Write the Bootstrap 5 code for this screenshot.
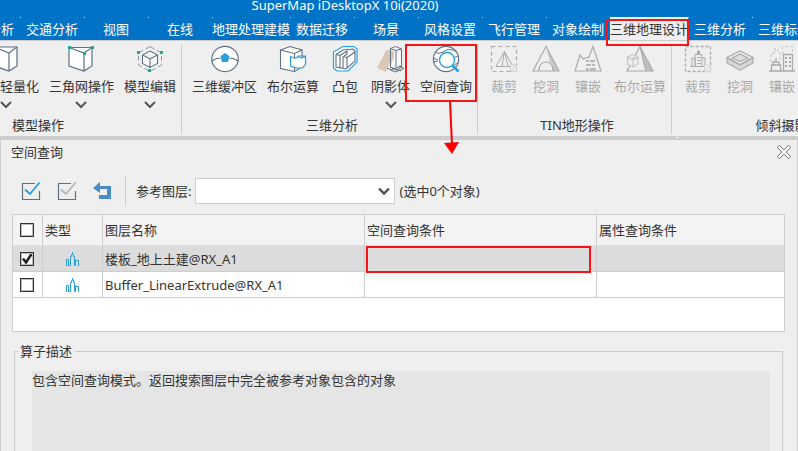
<!DOCTYPE html>
<html lang="zh-CN">
<head>
<meta charset="utf-8">
<meta name="viewport" content="width=device-width, initial-scale=1">
<title>SuperMap iDesktopX 10i(2020)</title>
<link href="https://cdn.jsdelivr.net/npm/bootstrap@5.3.0/dist/css/bootstrap.min.css" rel="stylesheet">
<style>
  :root { --line: #cdcdcd; --face: #efefef; --ink: #333; --steel: #5f7084; --sky: #2a9fdc; --teal: #27a68f; }
  body { font: 13px/20px "Noto Sans", "Noto Sans CJK SC", sans-serif; color: var(--ink); background: var(--face); overflow: hidden; }
  button { color: inherit; }
  svg { display: block; fill: none; stroke: var(--steel); flex: none; }
  .titlebar, .ribbon-tabs { background: #0173c7; color: #fff; }
  .titlebar { height: 17px; line-height: 10px; padding-right: 108px; font-size: 13px; }
  .ribbon-tabs { height: 24px; margin: 0; border-bottom: 1px solid var(--line); overflow: visible; }
  .ribbon-tabs .tab-btn { min-width: 64px; height: 23px; padding: 0; border: 0; background: none; color: #fff; white-space: nowrap; position: relative; }
  .ribbon-tabs .tab-btn::before { content: ""; position: absolute; left: 0; top: 0; width: 1px; height: 1px; background: #cfe3f4; }
  .ribbon-tabs .tab-btn.chosen { background: var(--face); color: var(--ink); }
  .tabs-shift { margin-left: -44px; }
  .ribbon { height: 95px; }
  .rgroup { border-right: 1px solid var(--line); padding: 0 0 0 5px; margin: 3px 0 2px; flex: none; }
  .rgroup.first { width: 292px; margin-left: -110px; }
  .rgroup.last { width: 240px; border: 0; }
  .rgroup-title { line-height: 20px; margin-bottom: -1px; text-align: center; }
  .tool { min-width: 42px; padding: 1px 5px 0; border: 0; background: none; white-space: nowrap; position: relative; }
  .tool .tool-text { line-height: 20px; margin-top: 3px; }
  .tool .chev { margin-top: 5px; stroke: #555; stroke-width: 2; }
  .tool:disabled { color: #a9a9a9; }
  .tool:disabled svg { stroke: #ababab; }
  .splitline { height: 4px; background: var(--line); }
  .splitgrip { width: 3px; height: 1px; background: #fff; margin: 1px 119px 0 0; }
  .callout { position: absolute; border: 2px solid #f61414; pointer-events: none; z-index: 2; }
  .callout-tab { left: -4px; right: -1px; top: 2px; height: 27px; }
  .callout-tool { left: -10px; right: 0; top: 0; height: 58px; }
  .callout-arrow { position: absolute; left: 27px; top: 55px; z-index: 2; }
  .callout-cell { left: 1px; right: 5px; top: 0; bottom: -2px; }
  .panel { border: solid var(--line); border-width: 0 1px; padding: 0 12px 0 11px; }
  .panel-head { height: 24px; margin: 0 -6px 0 -1px; }
  .panel-head .shut, .mini { border: 0; background: none; padding: 0; }
  .toolbar { height: 50px; padding: 3px 0 0 9px; }
  .toolbar .bar { width: 1px; height: 30px; background: var(--line); margin: 0 10px 0 12px; }
  .toolbar .form-select { width: 200px; height: 26px; padding: 0 20px 0 4px; font-size: 13px; border: 1px solid var(--line); border-radius: 0; background-color: #fff; background-size: 12px 12px; background-position: right 4px center;
    background-image: url("data:image/svg+xml,%3csvg xmlns='http://www.w3.org/2000/svg' viewBox='0 0 12 12'%3e%3cpath fill='none' stroke='%23505050' stroke-width='2.4' d='M1 3.5 6 8.5 11 3.5'/%3e%3c/svg%3e"); }
  .layers-box { background: #fff; border: 1px solid var(--line); height: 118px; }
  .layers { table-layout: fixed; width: 100%; border-collapse: separate; border-spacing: 0; }
  .layers th, .layers td { border: solid var(--line); border-width: 0 1px 1px 0; height: 26px; padding: 0 2px; font-weight: 400; position: relative; white-space: nowrap; }
  .layers th { height: 31px; background: #f3f3f3; border-bottom-color: #dcdcdc; }
  .layers th:first-child, .layers td:first-child, .layers td:nth-child(2) { padding: 0 4px 0 2px; }
  .layers th:last-child, .layers td:last-child { border-right: 0; }
  .layers .picked td { background: #dcdcdc; }
  .layers .form-check-input { display: block; width: 14px; height: 14px; margin: 0 auto; border: 1px solid #333; outline: 1px solid #bbb; outline-offset: -2px; border-radius: 0; background-color: #fff; }
  .layers .form-check-input:checked { background-size: 14px 14px; background-position: center; background-image: url("data:image/svg+xml,%3csvg xmlns='http://www.w3.org/2000/svg' viewBox='0 0 14 14'%3e%3cpath fill='none' stroke='%23222' stroke-width='2.6' d='M3 6.5 6 10.5 11.5 2'/%3e%3c/svg%3e"); }
  .layers svg { margin: 0 auto; stroke: var(--sky); }
  .describe { border: 1px solid var(--line); border-bottom: 0; margin: 19px 2px 0; padding: 0 12px 0 17px; }
  .describe .caption { line-height: 20px; margin: -11px 0 0 -14px; padding: 0 3px 0 2px; background: var(--face); align-self: flex-start; }
  .describe .note { background: #e5e5e5; margin-top: 10px; line-height: 18px; }
</style>
<script src="https://cdn.jsdelivr.net/npm/bootstrap@5.3.0/dist/js/bootstrap.bundle.min.js"></script>
</head>
<body>
<div class="d-flex flex-column vh-100">
  <header class="titlebar text-center">SuperMap iDesktopX 10i(2020)</header>
  <nav class="ribbon-tabs d-flex">
    <button class="tab-btn tabs-shift flex-shrink-0">空间分析</button>
    <button class="tab-btn flex-shrink-0">交通分析</button>
    <button class="tab-btn flex-shrink-0">视图</button>
    <button class="tab-btn flex-shrink-0">在线</button>
    <button class="tab-btn flex-shrink-0">地理处理建模</button>
    <button class="tab-btn flex-shrink-0">数据迁移</button>
    <button class="tab-btn flex-shrink-0">场景</button>
    <button class="tab-btn flex-shrink-0">风格设置</button>
    <button class="tab-btn flex-shrink-0">飞行管理</button>
    <button class="tab-btn flex-shrink-0">对象绘制</button>
    <button class="tab-btn flex-shrink-0 chosen">三维地理设计<span class="callout callout-tab"></span></button>
    <button class="tab-btn flex-shrink-0">三维分析</button>
    <button class="tab-btn flex-shrink-0">三维标绘</button>
  </nav>

  <section class="ribbon d-flex flex-shrink-0">
    <div class="rgroup first d-flex flex-column justify-content-between">
      <div class="d-flex justify-content-end align-items-start">
        <button class="tool d-flex flex-column align-items-center">
          <svg width="28" height="28" stroke-width="1.2"><path fill="#fff" d="M2 2H25V21L17 26 2 21Z"/><path d="M2 2 17 8 25 2M17 8V26"/></svg>
          <span class="tool-text">模型轻量化</span>
          <svg class="chev" width="12" height="8"><path d="M1 1 6 6 11 1"/></svg>
        </button>
        <button class="tool d-flex flex-column align-items-center">
          <svg width="28" height="28" stroke-width="1.2"><path fill="#fff" d="M2 2.500H25V21L17 26 2 21Z"/><path d="M2 2.500 17 8 25 2.500M17 8V26"/><path fill="#27a68f" stroke="none" d="M1 1h3v3H1zM24 1h3v3h-3zM16 7h3v3h-3z"/></svg>
          <span class="tool-text">三角网操作</span>
          <svg class="chev" width="12" height="8"><path d="M1 1 6 6 11 1"/></svg>
        </button>
        <button class="tool d-flex flex-column align-items-center">
          <svg width="28" height="28"><path stroke="#8a97a5" stroke-dasharray="5 3" d="M14 1.500 25.500 8V20L14 26.500 2.500 20V8Z"/><path fill="#fff" stroke-width="1.100" d="M14 6 21.500 10V18.500L14 22.500 6.500 18.500V10ZM6.500 10 14 14 21.500 10M14 14V22"/><path fill="#27a68f" stroke="none" d="M1 6h3v3H1zM24 6h3v3h-3zM12 24h3v3h-3z"/></svg>
          <span class="tool-text">模型编辑</span>
          <svg class="chev" width="12" height="8"><path d="M1 1 6 6 11 1"/></svg>
        </button>
      </div>
      <div class="rgroup-title">模型操作</div>
    </div>

    <div class="rgroup d-flex flex-column justify-content-between">
      <div class="d-flex align-items-start">
        <button class="tool d-flex flex-column align-items-center">
          <svg width="28" height="28" stroke-width="1.2"><ellipse cx="14" cy="14" rx="13.200" ry="12.600" fill="#fff"/><path d="M1 16Q5 13 9.500 13M27 16Q23 13 18.500 13"/><path fill="#2a9fdc" stroke="none" d="M14 8 18.500 11.200 17 17H11L9.500 11.200Z"/></svg>
          <span class="tool-text">三维缓冲区</span>
        </button>
        <button class="tool d-flex flex-column align-items-center">
          <svg width="28" height="28" stroke-width="1.1"><path fill="#fff" d="M1.500 5 11 1.500 23 5V22L15.500 26.500 1.500 23.500Z"/><path d="M1.500 5 15.500 8.500 23 5M15.500 8.500V26.500"/><path fill="#fff" stroke="#2a9fdc" stroke-width="1.200" d="M11.500 11.500Q18 15 19 11L26.500 11V19L24 22.500Q18 24.500 11.500 21ZM19 11Q22 15 26.500 11"/></svg>
          <span class="tool-text">布尔运算</span>
        </button>
        <button class="tool d-flex flex-column align-items-center">
          <svg width="28" height="28"><path stroke="#2a9fdc" stroke-width="1.200" fill="#fff" d="M2.500 7 12 1.500H23L26 4V17L17 26H6L2.500 23Z"/><path stroke-width="1.100" d="M5 9.500 12 5 22 4 24 6V16L15 24 5 22ZM5 9.500 9 10.500V23M9 10.500 16 6V9L12 12V23M12 11.500 16 12.500V23.500M16 12.500 24 7"/></svg>
          <span class="tool-text">凸包</span>
        </button>
        <button class="tool d-flex flex-column align-items-center">
          <svg width="28" height="28"><path fill="#dac8b4" stroke="none" d="M9.500 5H18L9 27 0 23Z"/><path fill="#f8f8f8" d="M13.500 3.500 18.500 1.500 24.500 4V22L19 25 13.500 22Z"/><path d="M13.500 3.500 19 5.500 24.500 4M19 5.500V22M10 23 18 27 27 23.500 22 21M13 22 24 26M13.500 25 24 21"/><path fill="#dac8b4" stroke="none" d="M14 6 17 6V12L14 19Z"/></svg>
          <span class="tool-text">阴影体</span>
          <svg class="chev" width="12" height="8"><path d="M1 1 6 6 11 1"/></svg>
        </button>
        <button class="tool d-flex flex-column align-items-center">
          <svg width="28" height="28"><ellipse cx="14" cy="14" rx="12.600" ry="12.600" fill="#fff" stroke-width="1.200"/><path d="M3 7Q6 10 11 7Q17 2 25 7M1.500 13 6 15M1.500 17 6 16M23 12Q26 11 26.500 12M22 20Q25 18 26 18"/><circle cx="15" cy="15" r="7.500" fill="#fff" stroke="#2a9fdc" stroke-width="1.400"/><path stroke="#2a9fdc" stroke-width="2.600" d="M20.500 20.500 26.500 26.500"/></svg>
          <span class="tool-text">空间查询</span>
          <span class="callout callout-tool"></span>
          <svg class="callout-arrow" width="20" height="58"><path stroke="#f00" stroke-width="2" d="M8 2 10 46"/><path fill="#f00" stroke="none" d="M2 44 17 43 10 55Z"/></svg>
        </button>
      </div>
      <div class="rgroup-title">三维分析</div>
    </div>

    <div class="rgroup d-flex flex-column justify-content-between">
      <div class="d-flex align-items-start">
        <button class="tool d-flex flex-column align-items-center" disabled>
          <svg width="28" height="28"><path stroke-width="1.200" stroke-dasharray="4 3" d="M1.500 1.500H26.500V26.500H1.500Z"/><path d="M6 21.500 14.500 6.500 23 21.500ZM14.500 6.500 12 21M14.500 6.500 18 21"/><path fill="#efefef" stroke="#d2d2d2" d="M20.500 20V26.500H27M20.500 20H26.500V27M20 27 28 19"/></svg>
          <span class="tool-text">裁剪</span>
        </button>
        <button class="tool d-flex flex-column align-items-center" disabled>
          <svg width="28" height="28" stroke-width="1.2"><path fill="#c6c6c6" stroke="none" d="M14 1 27 26H21Q21 18 18 17Z"/><path d="M14 1.500 27 26H1ZM7 26Q7 17 14 17T21 26"/></svg>
          <span class="tool-text">挖洞</span>
        </button>
        <button class="tool d-flex flex-column align-items-center" disabled>
          <svg width="28" height="28" stroke-width="1.2"><path d="M1 26 6 10 9 14 15 12 19 1.500 27 26Z"/><path fill="#b8b8b8" stroke="none" d="M12 15h3v2h-3zM16 15h5v2h-5zM12 19h5v2h-5zM18 19h3v2h-3zM12 23h3v3h-3zM16 23h6v3h-6z"/></svg>
          <span class="tool-text">镶嵌</span>
        </button>
        <button class="tool d-flex flex-column align-items-center" disabled>
          <svg width="28" height="28"><path fill="#c0c0c0" stroke="none" d="M14 1 27 26H20Z"/><path stroke-width="1.200" d="M14 1.500 27 26H1ZM14 1.500 20 26"/><path fill="#efefef" stroke="#c9c9c9" stroke-width="1.300" d="M1.500 12 7 9.500 12 12V19L7 22 1.500 19ZM1.500 12 7 15 12 12M7 15V22"/></svg>
          <span class="tool-text">布尔运算</span>
        </button>
      </div>
      <div class="rgroup-title">TIN地形操作</div>
    </div>

    <div class="rgroup last d-flex flex-column justify-content-between">
      <div class="d-flex align-items-start">
        <button class="tool d-flex flex-column align-items-center" disabled>
          <svg width="28" height="28"><path stroke-width="1.400" stroke-dasharray="3 2" d="M1.500 1.500H26.500V26.500H1.500Z"/><path d="M6 21.500H23M8 21V13H11V21M11 21V9.500H18V21M18 13H21V21M14.500 5V9"/><path fill="#ababab" stroke="none" d="M13 6h3v3h-3zM13 12h4v1h-4zM13 15h4v1h-4zM13 18h4v1h-4z"/><path fill="#efefef" stroke="#d2d2d2" d="M20.500 20V26.500H27M20.500 20H26.500V27M20 27 28 19"/></svg>
          <span class="tool-text">裁剪</span>
        </button>
        <button class="tool d-flex flex-column align-items-center" disabled>
          <svg width="28" height="28" stroke-width="1.2"><path fill="#d8d8d8" d="M1 13V18L14 25 27 18V13L14 20Z"/><path fill="#efefef" d="M1 12.500 14 6 27 12.500 14 19.500Z"/><path fill="#ddd" d="M6 13 14 9 22 13 14 16.500Z"/></svg>
          <span class="tool-text">挖洞</span>
        </button>
        <button class="tool d-flex flex-column align-items-center" disabled>
          <svg width="28" height="28"><path stroke="#cfcfcf" stroke-width="1.300" stroke-dasharray="3 2" d="M3 17V8H7V4H10V8H12V17M14.500 9V1.500H24.500V9"/><path stroke-width="1.300" d="M1 26H27M3.500 26V20H12.500V26M5 20V17H11V20M8 13V17M15.500 26V9.500H24.500V26"/><path fill="#ababab" stroke="none" d="M17 12h2v2h-2zM21 12h2v2h-2zM17 16h2v2h-2zM21 16h2v2h-2zM17 20h2v2h-2zM21 20h2v2h-2z"/></svg>
          <span class="tool-text">镶嵌</span>
        </button>
      </div>
      <div class="rgroup-title">倾斜摄影操作</div>
    </div>
  </section>
  <div class="splitline d-flex justify-content-end flex-shrink-0"><div class="splitgrip"></div></div>

  <main class="panel d-flex flex-column flex-grow-1">
    <div class="panel-head d-flex align-items-center justify-content-between">
      <span>空间查询</span>
      <button class="shut" aria-label="关闭"><svg width="14" height="14"><path stroke="#8c8c8c" stroke-width="4" d="M1 1 13 13M13 1 1 13"/><path stroke="#fff" stroke-width="2" d="M1.500 1.500 12.500 12.500M12.500 1.500 1.500 12.500"/></svg></button>
    </div>

    <div class="toolbar d-flex align-items-center">
      <div class="d-flex gap-3">
        <button class="mini" aria-label="全选"><svg width="20" height="20" stroke-width="1.2"><path d="M14 2.500H1.500V18.500H18.500V10"/><path stroke="#2a9fdc" stroke-width="1.800" d="M4 8.500 9 13 18.500 1.500"/></svg></button>
        <button class="mini" aria-label="反选"><svg width="20" height="20" stroke-width="1.2"><path d="M14 2.500H1.500V18.500H18.500V10"/><path stroke="#b3b8bd" stroke-width="1.800" d="M4 8.500 9 13 18.500 1.500"/></svg></button>
        <button class="mini" aria-label="撤销"><svg width="20" height="20"><path fill="#4c8ac8" stroke="none" d="M0 7 7 1V5H18V18H6V14H14V8H7V12Z"/></svg></button>
      </div>
      <div class="bar"></div>
      <label for="refLayer">参考图层:</label>
      <select id="refLayer" class="form-select mx-1"><option></option></select>
      <span>(选中0个对象)</span>
    </div>

    <div class="layers-box flex-shrink-0">
      <table class="layers">
        <colgroup><col style="width:30px"><col style="width:60px"><col style="width:262px"><col style="width:232px"><col></colgroup>
        <thead>
          <tr><th><input class="form-check-input" type="checkbox" aria-label="全部图层"></th><th>类型</th><th>图层名称</th><th>空间查询条件</th><th>属性查询条件</th></tr>
        </thead>
        <tbody>
          <tr class="picked">
            <td><input class="form-check-input" type="checkbox" checked aria-label="楼板_地上土建@RX_A1"></td>
            <td><svg width="14" height="14"><path d="M1.500 14V7.500H3.500V14M5.500 13.500V4.500H6.500V2.500H7.500V0M7.500 2.500H8.500V4.500H9.500V13.500H10.500V7.500M3.500 13.500H5.500M10.500 8.500H13.500V14"/></svg></td>
            <td>楼板_地上土建@RX_A1</td><td><span class="callout callout-cell"></span></td><td></td>
          </tr>
          <tr>
            <td><input class="form-check-input" type="checkbox" aria-label="Buffer_LinearExtrude@RX_A1"></td>
            <td><svg width="14" height="14"><path d="M1.500 14V7.500H3.500V14M5.500 13.500V4.500H6.500V2.500H7.500V0M7.500 2.500H8.500V4.500H9.500V13.500H10.500V7.500M3.500 13.500H5.500M10.500 8.500H13.500V14"/></svg></td>
            <td>Buffer_LinearExtrude@RX_A1</td><td></td><td></td>
          </tr>
        </tbody>
      </table>
    </div>

    <section class="describe d-flex flex-column flex-grow-1">
      <div class="caption">算子描述</div>
      <div class="note flex-grow-1">包含空间查询模式。返回搜索图层中完全被参考对象包含的对象</div>
    </section>
  </main>
</div>
</body>
</html>
